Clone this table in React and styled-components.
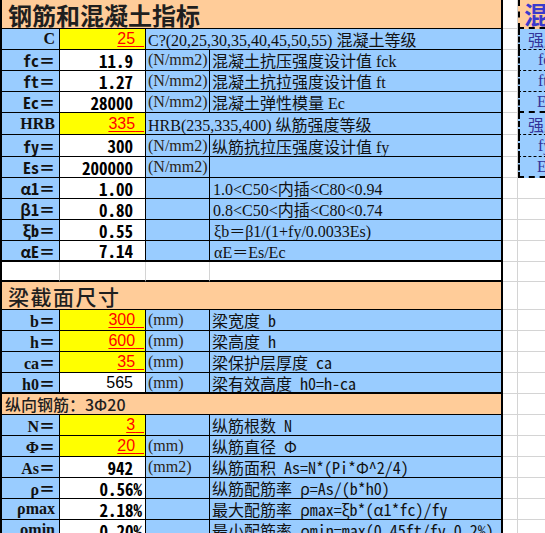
import styled, { createGlobalStyle } from 'styled-components';

const BLUE = '#99ccff';
const PEACH = '#ffcc99';
const YELLOW = '#ffff00';
const GRID = '#d4d4d4';

const CJK = '"Noto Sans CJK SC", sans-serif';
const SERIF = `"Liberation Serif", ${CJK}`;
const MONO = `"Noto Sans Mono CJK SC", "Liberation Mono", ${CJK}`;

const GlobalStyle = createGlobalStyle`
  html, body {
    margin: 0;
    background: #fff;
    overflow: hidden;
  }
`;

const Sheet = styled.div`
  width: 545px;
  height: 533px;
  overflow: hidden;
  display: flex;
  flex-direction: column;
`;

const Row = styled.div`
  display: grid;
  grid-template-columns: 60px 86px 64px 293px 15px 60px;
  height: ${(p) => p.$h || 21}px;
  flex: none;
`;

const Cell = styled.div`
  box-sizing: border-box;
  display: flex;
  align-items: center;
  overflow: hidden;
  white-space: nowrap;
  grid-column: span ${(p) => p.$span || 1};
  background: ${(p) => p.$bg || BLUE};
  border-right: 1px solid #000;
  border-bottom: ${(p) => p.$bb || 1}px solid #000;
`;

const Label = styled(Cell)`
  border-left: 2px solid #000;
  justify-content: flex-end;
  padding-right: 4px;
  font-family: ${(p) => (p.$mono ? MONO : SERIF)};
  font-weight: bold;
  font-size: 16px;
  color: #111;
`;

const Value = styled(Cell)`
  justify-content: flex-end;
  padding-right: ${(p) => (p.$pct ? 3 : 12)}px;
  background: ${(p) => p.$bg || '#fff'};
  font-family: ${MONO};
  font-weight: bold;
  font-size: 17px;
  color: #000;
`;

const Plain = styled.span`
  font-family: "Liberation Sans", sans-serif;
  font-weight: normal;
  font-size: 16px;
`;

const Input = styled.span`
  font-family: "Liberation Sans", sans-serif;
  font-weight: normal;
  font-size: 16px;
  color: #ff0000;
  text-decoration: underline;
  text-underline-offset: 2px;
  margin-right: -11px;
`;

const Unit = styled(Cell)`
  padding-left: 2px;
  font-family: "Liberation Serif", serif;
  font-size: 16px;
  color: #2b2416;
`;

const Desc = styled(Cell)`
  border-right: 2px solid #000;
  padding-left: ${(p) => (p.$pad ?? 2)}px;
  font-family: ${(p) => (p.$mono ? MONO : SERIF)};
  font-size: 16px;
  color: #111;
`;

const Title = styled(Cell)`
  grid-column: span 4;
  background: ${PEACH};
  border-left: 2px solid #000;
  border-right: 2px solid #000;
  padding-left: ${(p) => p.$pad || 6}px;
  font-family: ${CJK};
  font-weight: ${(p) => p.$weight || 700};
  font-size: ${(p) => p.$size || 24}px;
  letter-spacing: ${(p) => p.$ls || 0}px;
  color: #1f1f1f;
`;

const Blank = styled(Cell)`
  background: #fff;
  border-right: 1px solid ${GRID};
  border-left: ${(p) => (p.$first ? '2px solid #000' : 'none')};
  border-bottom: ${(p) => p.$bb || 1}px solid ${(p) => (p.$dark ? '#000' : GRID)};
  ${(p) => p.$edge && 'border-right: 2px solid #000;'}
`;

const Gap = styled.div`
  box-sizing: border-box;
  border-right: 1px solid ${GRID};
  border-bottom: 1px solid ${GRID};
`;

const Side = styled.div`
  box-sizing: border-box;
  display: flex;
  align-items: center;
  white-space: nowrap;
  overflow: hidden;
  background: ${(p) => p.$bg || BLUE};
  border-left: 2px dashed #000;
  border-bottom: ${(p) => (p.$edge ? '2px dashed #000' : '1px dashed #000')};
  padding-left: ${(p) => p.$pad || 8}px;
  font-family: ${(p) => (p.$cjk ? CJK : SERIF)};
  font-size: ${(p) => p.$size || 16}px;
  font-weight: ${(p) => p.$weight || 400};
  color: ${(p) => p.$color || '#333399'};
`;

const SideEmpty = styled.div`
  box-sizing: border-box;
  border-bottom: 1px solid ${GRID};
`;

const side = [
  { text: '混凝', bg: PEACH, cjk: true, size: 24, weight: 700, pad: 4, edge: true, color: '#3a3acc' },
  { text: '强度', cjk: true },
  { text: 'fck', pad: 18 },
  { text: 'ft', pad: 18 },
  { text: 'Ec', pad: 17, edge: true },
  { text: '强度', cjk: true },
  { text: 'fy', pad: 18 },
  { text: 'Es', pad: 17, edge: true },
];

const Right = ({ i }) => {
  const s = side[i];
  return (
    <>
      <Gap />
      {s ? (
        <Side
          $bg={s.bg}
          $cjk={s.cjk}
          $size={s.size}
          $weight={s.weight}
          $pad={s.pad}
          $edge={s.edge}
          $color={s.color}
        >
          {s.text}
        </Side>
      ) : (
        <SideEmpty />
      )}
    </>
  );
};

const In = ({ v }) => (
  <Value $bg={YELLOW}>
    <Input>{v}{'\u00a0\u00a0'}</Input>
  </Value>
);

const section1 = [
  { label: 'C', serif: true, input: '25', span: 'C?(20,25,30,35,40,45,50,55) 混凝土等级' },
  { label: 'fc＝', value: '11.9', unit: '(N/mm2)', desc: '混凝土抗压强度设计值 fck' },
  { label: 'ft＝', value: '1.27', unit: '(N/mm2)', desc: '混凝土抗拉强度设计值 ft' },
  { label: 'Ec＝', value: '28000', unit: '(N/mm2)', desc: '混凝土弹性模量 Ec' },
  { label: 'HRB', serif: true, input: '335', span: 'HRB(235,335,400) 纵筋强度等级', h: 22 },
  { label: 'fy＝', value: '300', unit: '(N/mm2)', desc: '纵筋抗拉压强度设计值 fy', h: 22 },
  { label: 'Es＝', value: '200000', unit: '(N/mm2)', desc: '' },
  { label: 'α1＝', value: '1.00', unit: '', desc: '1.0<C50<内插<C80<0.94', pad: 3 },
  { label: 'β1＝', value: '0.80', unit: '', desc: '0.8<C50<内插<C80<0.74', pad: 3 },
  { label: 'ξb＝', value: '0.55', unit: '', desc: 'ξb＝β1/(1+fy/0.0033Es)', pad: 4 },
  { label: 'αE＝', value: '7.14', unit: '', desc: 'αE＝Es/Ec', pad: 4, bb: 2 },
];

const section2 = [
  { label: 'b＝', input: '300', unit: '(mm)', desc: '梁宽度 b' },
  { label: 'h＝', input: '600', unit: '(mm)', desc: '梁高度 h' },
  { label: 'ca＝', input: '35', unit: '(mm)', desc: '梁保护层厚度 ca' },
  { label: 'h0＝', plain: '565', unit: '(mm)', desc: '梁有效高度 h0=h-ca', bb: 2 },
];

const section3 = [
  { label: 'N＝', input: '3', unit: '', desc: '纵筋根数 N' },
  { label: 'Φ＝', input: '20', unit: '(mm)', desc: '纵筋直径 Φ' },
  { label: 'As＝', value: '942', unit: '(mm2)', desc: '纵筋面积 As=N*(Pi*Φ^2/4)' },
  { label: 'ρ＝', value: '0.56%', pct: true, unit: '', desc: '纵筋配筋率 ρ=As/(b*h0)' },
  { label: 'ρmax', value: '2.18%', pct: true, unit: '', desc: '最大配筋率 ρmax=ξb*(α1*fc)/fy' },
  { label: 'ρmin', value: '0.20%', pct: true, unit: '', desc: '最小配筋率 ρmin=max(0.45ft/fy,0.2%)' },
];

const DataRow = ({ r, i, mono }) => (
  <Row $h={r.h}>
    <Label $mono={!r.serif && mono} $bb={r.bb}>{r.label}</Label>
    {r.input ? (
      <In v={r.input} />
    ) : (
      <Value $pct={r.pct} $bb={r.bb}>
        {r.plain ? <Plain>{r.plain}</Plain> : r.value}
      </Value>
    )}
    {r.span ? (
      <Desc $span={2} $bb={r.bb}>{r.span}</Desc>
    ) : (
      <>
        <Unit $bb={r.bb}>{r.unit}</Unit>
        <Desc $mono={!mono} $pad={r.pad} $bb={r.bb}>{r.desc}</Desc>
      </>
    )}
    <Right i={i} />
  </Row>
);

export default function App() {
  return (
    <>
      <GlobalStyle />
      <Sheet>
        <Row $h={29}>
          <Title>钢筋和混凝土指标</Title>
          <Right i={0} />
        </Row>
        {section1.map((r, k) => (
          <DataRow key={r.label} r={r} i={k + 1} mono />
        ))}

        <Row $h={20}>
          <Blank $first $dark $bb={2} />
          <Blank $dark $bb={2} />
          <Blank $dark $bb={2} />
          <Blank $dark $bb={2} $edge />
          <Right i={-1} />
        </Row>

        <Row $h={28}>
          <Title $size={21} $ls={1.5} $weight={500} $pad={6}>梁截面尺寸</Title>
          <Right i={-1} />
        </Row>
        {section2.map((r) => (
          <DataRow key={r.label} r={r} i={-1} />
        ))}

        <Row $h={21}>
          <Title $size={16} $weight={500} $pad={3}>纵向钢筋：3Φ20</Title>
          <Right i={-1} />
        </Row>
        {section3.map((r) => (
          <DataRow key={r.label} r={r} i={-1} />
        ))}
      </Sheet>
    </>
  );
}
